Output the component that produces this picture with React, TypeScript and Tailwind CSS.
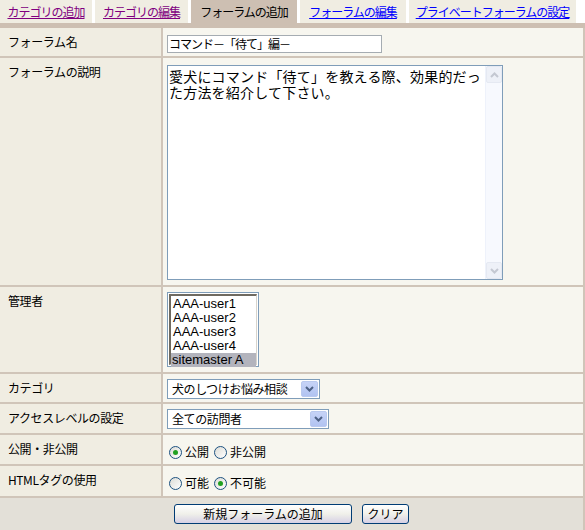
import React from 'react';

const font = { fontFamily: '"Noto Sans CJK JP", "Liberation Sans", sans-serif' };

const tabs = [
  { label: 'カテゴリの追加', w: 'w-[92px]', kind: 'visited' },
  { label: 'カテゴリの編集', w: 'w-[93px]', kind: 'visited' },
  { label: 'フォーラムの追加', w: 'w-[106px]', kind: 'active' },
  { label: 'フォーラムの編集', w: 'w-[106px]', kind: 'link' },
  { label: 'プライベートフォーラムの設定', w: 'w-[167px]', kind: 'link' },
];

const admins = ['AAA-user1', 'AAA-user2', 'AAA-user3', 'AAA-user4'];

const Chevron: React.FC<{ color?: string }> = ({ color = '#4d6185' }) => (
  <svg width="9" height="6" viewBox="0 0 9 6">
    <path d="M1 1 L4.5 4.5 L8 1" fill="none" stroke={color} strokeWidth="2" />
  </svg>
);

const Radio: React.FC<{ checked?: boolean }> = ({ checked }) => (
  <span className="inline-flex items-center justify-center w-[13px] h-[13px] rounded-full border border-[#1c5180] bg-gradient-to-br from-[#dcdcd6] to-white">
    {checked && <span className="w-[5px] h-[5px] rounded-full bg-[#21a121]" />}
  </span>
);

const Select: React.FC<{ text: string; w: string }> = ({ text, w }) => (
  <div className={`${w} h-[20px] flex border border-[#7f9db9] bg-white`}>
    <div className="flex-1 pl-[4px] text-[12px] leading-[18px] tracking-[-0.4px] whitespace-nowrap overflow-hidden text-black">
      {text}
    </div>
    <div className="w-[17px] m-[1px] flex items-center justify-center rounded-[2px] bg-gradient-to-b from-[#c6d3f7] to-[#b1c3f1] border border-[#b9c9ef]">
      <Chevron />
    </div>
  </div>
);

const Button: React.FC<{ text: string; w: string }> = ({ text, w }) => (
  <div className={`${w} h-[20px] flex items-center justify-center rounded-[3px] border border-[#003c74] bg-gradient-to-b from-white via-[#f0f0ea] to-[#d6d0e5] text-[12px] text-black`}>
    {text}
  </div>
);

const Row: React.FC<{ label: string; h: string; children: React.ReactNode }> = ({ label, h, children }) => (
  <div className={`flex ${h} border-b-2 border-[#d0c5b9]`}>
    <div className="w-[163px] shrink-0 border-r-2 border-[#d0c5b9] bg-[#f0ede2] pl-[8px] pt-[7px] text-[12px] leading-[14px] tracking-[-0.4px]">
      {label}
    </div>
    <div className="flex-1 bg-[#f7f6ef] pl-[4px]">{children}</div>
  </div>
);

export default function App() {
  return (
    <div className="w-[585px] h-[530px] bg-white text-black overflow-hidden" style={font}>
      <div className="flex h-[23px] gap-[3px] bg-white">
        {tabs.map((t) => (
          <div
            key={t.label}
            className={`${t.w} shrink-0 flex items-center justify-center text-[12px] tracking-[-1px] whitespace-nowrap ${
              t.kind === 'active' ? 'bg-[#cdbfb2]' : 'bg-[#f0ede2]'
            }`}
          >
            <span
              className={
                t.kind === 'visited'
                  ? 'text-[#800080] underline'
                  : t.kind === 'link'
                  ? 'text-[#0000ff] underline'
                  : 'text-black'
              }
            >
              {t.label}
            </span>
          </div>
        ))}
      </div>
      <div className="h-[5px] bg-[#cdbfb2]" />

      <div className="border-r-2 border-[#d0c5b9]">
        <Row label="フォーラム名" h="h-[30px]">
          <div className="mt-[7px] w-[215px] h-[18px] border border-[#a5acb2] bg-white pl-[1px] text-[12px] leading-[16px] tracking-[-1px] whitespace-nowrap">
            コマンド－「待て」編－
          </div>
        </Row>

        <Row label="フォーラムの説明" h="h-[229px]">
          <div className="mt-[7px] w-[336px] h-[215px] flex border border-[#7f9db9] bg-white">
            <div className="flex-1 pl-[1px] pt-[2px] text-[14px] leading-[16px] tracking-[0.2px]">
              愛犬にコマンド「待て」を教える際、効果的だった方法を紹介して下さい。
            </div>
            <div className="w-[17px] flex flex-col justify-between bg-[#f7f9fe] border-l border-[#eef2fb]">
              <div className="h-[17px] flex items-center justify-center rounded-[2px] border border-[#e5e9f2] bg-[#eef1f8]">
                <span className="rotate-180 flex">
                  <Chevron color="#c4c8d2" />
                </span>
              </div>
              <div className="h-[17px] flex items-center justify-center rounded-[2px] border border-[#e5e9f2] bg-[#eef1f8]">
                <Chevron color="#c4c8d2" />
              </div>
            </div>
          </div>
        </Row>

        <Row label="管理者" h="h-[87px]">
          <div className="mt-[5px] w-[92px] h-[75px] border border-[#7f9db9] p-[1px] bg-white">
            <div className="h-full border-t-2 border-l-2 border-[#6f6a60] border-r border-b border-r-[#d8d4cc] border-b-[#d8d4cc] pt-[1px] font-['Liberation_Sans',sans-serif] text-[13px] leading-[14px]">
              {admins.map((a) => (
                <div key={a} className="pl-[2px] h-[14px]">
                  {a}
                </div>
              ))}
              <div className="pl-[1px] h-[14px] bg-[#b3b4bd]">sitemaster A</div>
            </div>
          </div>
        </Row>

        <Row label="カテゴリ" h="h-[30px]">
          <div className="mt-[5px]">
            <Select text="犬のしつけお悩み相談" w="w-[153px]" />
          </div>
        </Row>

        <Row label="アクセスレベルの設定" h="h-[31px]">
          <div className="mt-[5px]">
            <Select text="全ての訪問者" w="w-[162px]" />
          </div>
        </Row>

        <Row label="公開・非公開" h="h-[31px]">
          <div className="mt-[10px] flex items-center text-[12px] leading-[14px] pl-[2px]">
            <Radio checked />
            <span className="ml-[3px] mr-[5px]">公開</span>
            <Radio />
            <span className="ml-[3px]">非公開</span>
          </div>
        </Row>

        <Row label="HTMLタグの使用" h="h-[32px]">
          <div className="mt-[10px] flex items-center text-[12px] leading-[14px] pl-[2px]">
            <Radio />
            <span className="ml-[3px] mr-[5px]">可能</span>
            <Radio checked />
            <span className="ml-[3px]">不可能</span>
          </div>
        </Row>

        <div className="h-[32px] bg-[#e3e0d8] flex items-start justify-center pt-[6px] gap-[10px]">
          <Button text="新規フォーラムの追加" w="w-[178px]" />
          <Button text="クリア" w="w-[47px]" />
        </div>
      </div>
    </div>
  );
}
